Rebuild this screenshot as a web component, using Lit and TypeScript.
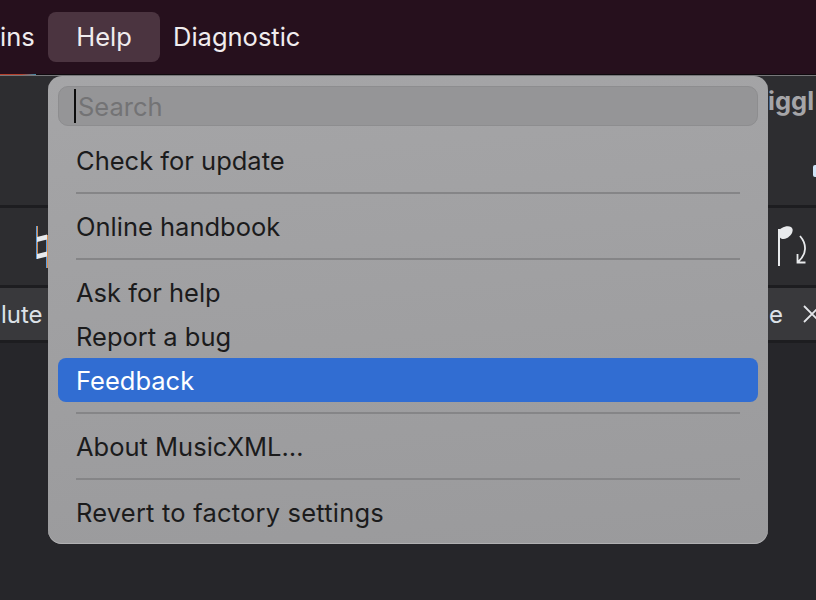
import { LitElement, html, css } from 'lit'
import { customElement } from 'lit/decorators.js'

type MenuEntry = { label: string; active?: boolean; wide?: boolean } | 'sep'

const ENTRIES: MenuEntry[] = [
  { label: 'Check for update' },
  'sep',
  { label: 'Online handbook' },
  'sep',
  { label: 'Ask for help' },
  { label: 'Report a bug' },
  { label: 'Feedback', active: true },
  'sep',
  { label: 'About MusicXML…' },
  'sep',
  { label: 'Revert to factory settings', wide: true }
]

@customElement('app-root')
export class AppRoot extends LitElement {
  static styles = css`
    :host {
      display: block;
      position: relative;
      width: 816px;
      height: 600px;
      overflow: hidden;
      background: #26262a;
      font-family: Inter, "Liberation Sans", sans-serif;
    }

    .menubar {
      position: relative;
      height: 75px;
      background: #26101d;
      border-bottom: 1px solid #0f0a0e;
      box-sizing: border-box;
      display: flex;
      align-items: flex-start;
      padding-top: 12px;
      color: #f0ecee;
      font-size: 25.5px;
    }

    .menubar span {
      height: 50px;
      line-height: 49px;
      flex: none;
    }

    .menubar .clipped {
      width: 48px;
    }

    .menubar .help {
      width: 112px;
      text-align: center;
      background: #4b3440;
      border-radius: 8px;
    }

    .menubar .diag {
      margin-left: 13px;
    }

    .accent {
      position: absolute;
      left: 0;
      bottom: -1px;
      width: 36px;
      height: 1px;
      background: linear-gradient(90deg, #b5402c 60%, #3d8fb0);
    }

    .toolbar {
      height: 130px;
      background: #2d2d30;
      border-top: 1px solid #77777a;
      box-sizing: border-box;
      display: flex;
      justify-content: flex-end;
    }

    .side {
      width: 48px;
      display: flex;
      flex-direction: column;
      align-items: flex-end;
    }

    .wiggle {
      width: 48px;
      font-size: 25.5px;
      font-weight: 700;
      line-height: 50px;
      color: #a5a5a8;
      white-space: nowrap;
    }

    .chip {
      width: 3px;
      height: 12px;
      margin-top: 39px;
      border-radius: 2px 0 0 2px;
      background: #cfe4f7;
    }

    .notes {
      height: 83px;
      background: #2d2d30;
      border-top: 3px solid #1d1d20;
      border-bottom: 3px solid #1d1d20;
      box-sizing: border-box;
      display: flex;
      align-items: center;
      justify-content: space-between;
      padding: 0 8px 0 34px;
    }

    .notes svg {
      display: block;
    }

    .tabs {
      height: 55px;
      background: #39393c;
      border-bottom: 3px solid #1d1d20;
      box-sizing: border-box;
      display: flex;
      align-items: center;
      justify-content: space-between;
      color: #dce2e8;
      font-size: 24px;
      white-space: nowrap;
    }

    .tabs .left {
      margin-left: 1px;
    }

    .tabs .right {
      display: flex;
      align-items: center;
      gap: 20px;
      margin-right: -5px;
    }

    .tabs svg {
      display: block;
    }

    .menu {
      position: absolute;
      left: 48px;
      top: 76px;
      width: 720px;
      height: 468px;
      box-sizing: border-box;
      padding: 10px;
      background: linear-gradient(175deg, #a5a5a7, #9a9a9c);
      box-shadow: inset 0 -1px 0 #b0b0b2;
      border-radius: 14px;
      color: #1b1b1c;
      font-size: 25.5px;
    }

    .search {
      height: 40px;
      border-radius: 10px;
      background: #959597;
      border: 1px solid #8d8d8f;
      box-sizing: border-box;
      display: flex;
      align-items: center;
      padding-left: 15px;
      margin-bottom: 13px;
      color: #737375;
    }

    .caret {
      width: 2px;
      height: 34px;
      background: #0c0c0c;
      margin-right: 2px;
    }

    .item {
      height: 44px;
      line-height: 44px;
      padding-left: 18px;
      border-radius: 8px;
      white-space: nowrap;
    }

    .item.active {
      margin-top: -1px;
      line-height: 46px;
      background: #316dd2;
      color: #fff;
    }

    .item.wide {
      letter-spacing: 0.2px;
    }

    .sep {
      height: 2px;
      margin: 9px 18px 11px;
      background: #858587;
    }

    .item.active + .sep {
      margin-top: 10px;
    }
  `

  render() {
    return html`
      <div class="menubar">
        <span class="clipped">ins</span>
        <span class="help">Help</span>
        <span class="diag">Diagnostic</span>
        <i class="accent"></i>
      </div>
      <div class="toolbar">
        <div class="side">
          <div class="wiggle">iggl</div>
          <i class="chip"></i>
        </div>
      </div>
      <div class="notes">
        <svg width="14" height="44" viewBox="0 0 14 44">
          <path d="M2.500 1v33M12.500 10v33" stroke="#5d9fe0" stroke-width="1" fill="none" />
          <path d="M3.500 1v33M13.500 10v33" stroke="#d98f52" stroke-width="1" fill="none" />
          <path d="M3 12l10-2.500v5L3 17zM3 29l10-2.500v5L3 34z" fill="#e8eaec" />
        </svg>
        <svg width="32" height="42" viewBox="0 0 32 42">
          <path d="M3 3v37" stroke="#e8eaec" stroke-width="2" fill="none" />
          <path d="M2.500 6C3 2 11 -1 15 1c4 3 0 9-4 11-4 2-9 1-8.500-6z" fill="#e8eaec" />
          <path d="M24 10c7 8 7 18-2 26M21.500 28v8.500h8" stroke="#e8eaec" stroke-width="1.800" fill="none" />
        </svg>
      </div>
      <div class="tabs">
        <span class="left">lute</span>
        <span class="right">
          <span>e</span>
          <svg width="18" height="18" viewBox="0 0 18 18">
            <path d="M1 1l16 16M17 1L1 17" stroke="#e4e6ea" stroke-width="1.800" />
          </svg>
        </span>
      </div>
      <div class="menu">
        <div class="search"><i class="caret"></i>Search</div>
        ${ENTRIES.map(entry => entry === 'sep'
          ? html`<div class="sep"></div>`
          : html`<div class="item ${entry.active ? 'active' : ''} ${entry.wide ? 'wide' : ''}">${entry.label}</div>`)}
      </div>
    `
  }
}

declare global {
  interface HTMLElementTagNameMap {
    'app-root': AppRoot
  }
}
